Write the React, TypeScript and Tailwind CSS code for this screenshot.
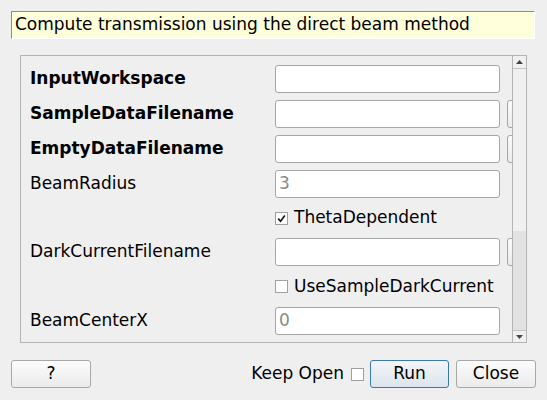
import React from "react";

const font = { fontFamily: '"DejaVu Sans", Verdana, sans-serif' };

function Input({ value }: { value?: string }) {
  return (
    <div className="w-[225px] h-[28px] shrink-0 rounded-[3px] border border-[#a6a6a6] bg-white flex items-center pl-[3px] text-[17px] text-[#8a8a8a]">
      {value}
    </div>
  );
}

function Browse() {
  return (
    <div className="w-[30px] h-[28px] shrink-0 ml-[7px] rounded-[3px] border border-[#a6a6a6] bg-gradient-to-b from-[#fbfbfb] to-[#ebebeb]" />
  );
}

function Checkbox({ checked }: { checked?: boolean }) {
  return (
    <div className="w-[13px] h-[13px] shrink-0 border border-[#a0a0a0] bg-white flex items-center justify-center">
      {checked && (
        <svg width="9" height="9" viewBox="0 0 9 9">
          <path d="M1.2 4.6 L3.6 7.3 L7.8 1.5" fill="none" stroke="#111" strokeWidth="1.6" />
        </svg>
      )}
    </div>
  );
}

function FieldRow({ label, bold, value, browse }: { label: string; bold?: boolean; value?: string; browse?: boolean }) {
  return (
    <div className="flex items-center h-[28px] shrink-0">
      <div className={"w-[245px] shrink-0 text-[17px] text-black whitespace-nowrap " + (bold ? "font-bold" : "font-normal")}>{label}</div>
      <Input value={value} />
      {browse && <Browse />}
    </div>
  );
}

function CheckRow({ label, checked, h }: { label: string; checked?: boolean; h: string }) {
  return (
    <div className={"flex items-center shrink-0 " + h}>
      <div className="w-[245px] shrink-0" />
      <Checkbox checked={checked} />
      <span className="ml-[6px] text-[17px] text-black whitespace-nowrap">{label}</span>
    </div>
  );
}

export default function App() {
  return (
    <div className="w-[547px] h-[400px] bg-[#efefef] overflow-hidden flex flex-col" style={font}>
      <div className="ml-[11px] mt-[11px] w-[524px] h-[28px] shrink-0 bg-[#ffffdc] border-t border-l border-[#8c8c8c] border-b border-r border-b-[#ffffff] border-r-[#ffffff] flex items-center pl-[3px] text-[17px] text-black whitespace-nowrap">
        Compute transmission using the direct beam method
      </div>

      <div className="ml-[20px] mt-[16px] w-[507px] h-[288px] shrink-0 border border-[#b4b4b4] flex overflow-hidden">
        <div className="flex-1 overflow-hidden pl-[9px] pt-[9px] flex flex-col gap-[7px]">
          <FieldRow label="InputWorkspace" bold />
          <FieldRow label="SampleDataFilename" bold browse />
          <FieldRow label="EmptyDataFilename" bold browse />
          <FieldRow label="BeamRadius" value="3" />
          <CheckRow label="ThetaDependent" checked h="h-[26px]" />
          <FieldRow label="DarkCurrentFilename" browse />
          <CheckRow label="UseSampleDarkCurrent" h="h-[27px]" />
          <FieldRow label="BeamCenterX" value="0" />
          <FieldRow label="" />
        </div>
        <div className="w-[14px] shrink-0 border-l border-[#b4b4b4] flex flex-col bg-[#f0f0f0]">
          <div className="h-[13px] shrink-0 flex items-center justify-center border-b border-[#c4c4c4]">
            <svg width="7" height="4" viewBox="0 0 7 4">
              <path d="M0 4 L3.5 0 L7 4 Z" fill="#444" />
            </svg>
          </div>
          <div className="h-[162px] shrink-0" />
          <div className="flex-1 bg-[#e2e2e2]" />
          <div className="h-[12px] shrink-0 flex items-center justify-center border-t border-[#c4c4c4]">
            <svg width="7" height="4" viewBox="0 0 7 4">
              <path d="M0 0 L7 0 L3.5 4 Z" fill="#444" />
            </svg>
          </div>
        </div>
      </div>

      <div className="mt-[17px] px-[11px] flex items-center h-[28px] shrink-0">
        <div className="w-[80px] h-[28px] rounded-[3px] border border-[#a8a8a8] bg-gradient-to-b from-[#fcfcfc] to-[#ebebeb] flex items-center justify-center text-[17px] text-black">
          ?
        </div>
        <div className="flex-1" />
        <span className="text-[17px] text-black whitespace-nowrap">Keep Open</span>
        <div className="ml-[7px]">
          <Checkbox />
        </div>
        <div className="ml-[6px] w-[79px] h-[28px] rounded-[3px] border border-[#3c78b0] bg-gradient-to-b from-[#f3f6f9] to-[#dbe4ed] flex items-center justify-center text-[17px] text-black">
          Run
        </div>
        <div className="ml-[7px] w-[80px] h-[28px] rounded-[3px] border border-[#a8a8a8] bg-gradient-to-b from-[#fcfcfc] to-[#ebebeb] flex items-center justify-center text-[17px] text-black">
          Close
        </div>
      </div>
    </div>
  );
}
